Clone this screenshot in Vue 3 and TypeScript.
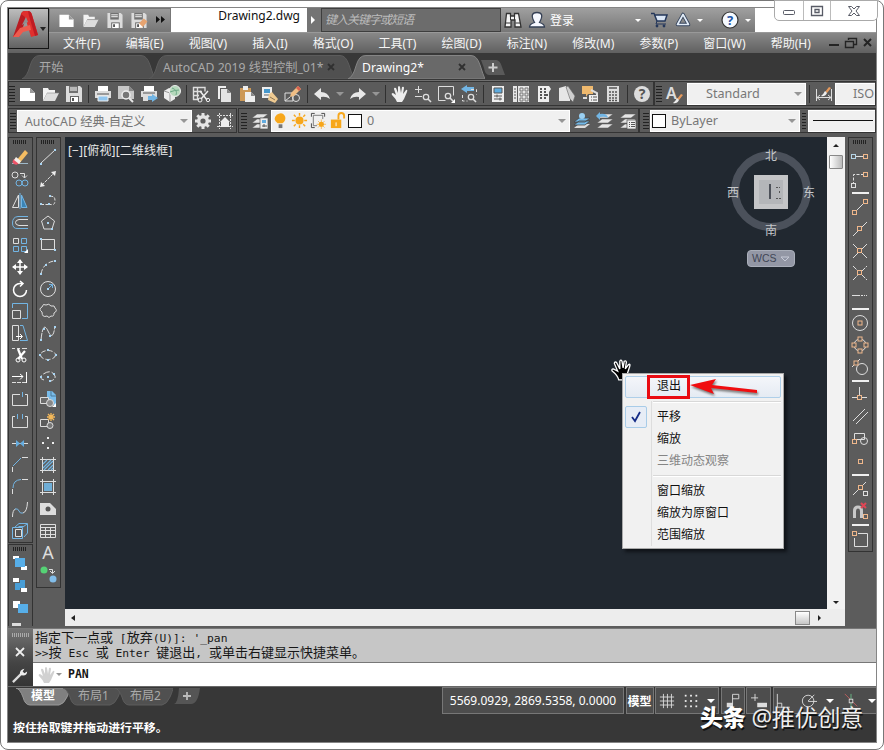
<script setup lang="ts">
type Glyphs = Record<string, string>

const w = 'stroke="#dedede" fill="none"'
const b = 'stroke="#72b5e4" fill="none"'
const o = 'stroke="#efb78b" fill="#5c5c5c"'
const dot = (x: number, y: number, c = '#a9d4f2') => `<rect x="${x - 1}" y="${y - 1}" width="2" height="2" fill="${c}"/>`
const sq = (x: number, y: number, c = o) => `<rect x="${x - 2.5}" y="${y - 2.5}" width="4" height="4" ${c}/>`
const lens = (x: number, y: number) => `<circle cx="${x}" cy="${y}" r="2.7" ${w} stroke-width="1.3"/><path d="M${x + 2} ${y + 2}l3 3" ${w} stroke-width="1.6"/>`
const brush = (x: number, y: number) => `<path d="M${x + 8} ${y}l2 1-4 5-2-1z" fill="#e69a5c"/><path d="M${x + 4} ${y + 4}l2 2q-2 4-6 3 2-1 4-5z" fill="#ededed"/>`
const disk = '<path d="M1 1h14l2 2v14H1z" fill="#dcdcdc"/><path d="M4 1h9v7H4z" fill="#717171"/><path d="M5 3h7M5 5h7" stroke="#fff"/><path d="M5 11h9v6H5z" fill="#666"/><path d="M6 12h7v5H6z" fill="#fff"/><path d="M7 13h2v3H7z" fill="#555"/>'
const layers = '<path d="M1 16l5-4h11l-5 4zM1 11l5-4h11l-5 4z M1 6l5-4h11l-5 4z" fill="#e5e5e5" stroke="#555" stroke-width=".5"/>'
const blueLayers = '<path d="M1 16l5-4h11l-5 4z" fill="#ddd"/><path d="M1 13l5-4h11l-5 4zM1 10l5-4h11l-5 4z" fill="#73b9e8" stroke="#454545" stroke-width=".8"/>'

const glyphs: Glyphs = {
  new: '<path d="M1 3h10l5 5v8H1z" fill="#fff"/><path d="M11 3v5h5z" fill="#999"/>',
  open: '<path d="M1 3h5l1 2h6v3H5l-4 8z" fill="#f2f2f2"/><path d="M5 8h12l-4 8H1z" fill="#ddd"/><path d="M5 8h12" stroke="#888" stroke-width=".6"/>',
  save: disk,
  saveas: disk + '<path d="M9 12l5-5 4 3-5 6-4 1z" fill="#e6a370"/><path d="M9 12l4 4-4 1z" fill="#fff"/>',
  print: '<path d="M4 1h10v5H4z" fill="#fff"/><path d="M1 6h16v7H1z" fill="#ddd"/><path d="M3 9h12" stroke="#555"/><path d="M4 11h10v5H4z" fill="#91c6ef" stroke="#eee"/>',
  preview: '<path d="M1 1h11l5 5v8H1z" fill="#c7c7c7"/><path d="M12 1v5h5" fill="#888"/><circle cx="9" cy="10" r="4" fill="#777" stroke="#eee" stroke-width="1.500"/><path d="M12 13l4 4" stroke="#e7e7e7" stroke-width="2"/>',
  publish: '<path d="M4 1h10v5H4z" fill="#fff"/><path d="M1 6h16v6H1zM3 12h5v4H3z" fill="#ddd"/><path d="M3 8h12" stroke="#555"/><path d="M8 11h4V9l6 4-6 4v-2H8z" fill="#72b5e4"/>',
  cloud: '<path d="M1 6l5-3 6 2v9l-5 3-6-4z" fill="#ececec"/><path d="M1 6l6 2v9M7 8l5-3" stroke="#999" fill="none"/><circle cx="12" cy="6" r="5.500" fill="#b7d9bd" stroke="#eee"/><path d="M9 3q6 2 4 7M7 7q5-2 9-2" fill="none" stroke="#6da987"/>',
  cut: '<path d="M1.500 2v13M1 2.500h12v4M1 6.500h9M1 10.500h6M1 14.500h6M5.500 3v11" stroke="#ddd" fill="none" stroke-width="1.400"/><path d="M8 6l7 9M16 6l-7 8" stroke="#eee" stroke-width="1.500"/><circle cx="8" cy="15" r="2" stroke="#eee" fill="none"/><circle cx="16" cy="15" r="1.700" stroke="#eee" fill="none"/>',
  copydoc: '<path d="M3 1h8v2H5v11H3z" fill="#eee"/><path d="M6 4h6l4 4v9H6z" fill="#e4e4e4"/><path d="M12 4v4h4z" fill="#888"/>',
  paste: '<path d="M2 3h11v13H2z" fill="#cc9856"/><path d="M5 1h5v4H5z" fill="#eee"/><path d="M7 7h6l4 4v6H7z" fill="#efefef"/><path d="M13 7v4h4z" fill="#888"/>',
  match: '<path d="M1 2h10v11H1z" fill="#eee"/><path d="M3 4h6v4H3z" fill="#4898cb"/><path d="M3 10h5" stroke="#666"/><path d="M8 9l3-2 6 7-3 4-7-3z" fill="#efca91"/><path d="M9 12l5 3" stroke="#8d7556"/>',
  blockedit: '<path d="M1 8h8v8H1zM1 16l5-4" '+w+'/><circle cx="12" cy="13" r="3.500" '+w+'/><path d="M7 8l7-7 3 3-7 7-4 1z" fill="#efbd84"/><path d="M14 1l3 3-2 2-3-3z" fill="#d96250"/>',
  undo: '<path d="M1 9l7-6v4q7 0 9 7-4-3-9-2v3z" fill="#e8e8e8"/>',
  redo: '<path d="M17 9l-7-6v4q-7 0-9 7 4-3 9-2v3z" fill="#e8e8e8"/>',
  hand: '<path d="M6 17q-1-3-5-7-1-2 1-2l3 2L3 4q0-2 2-1l2 5V2q1-2 2 0l1 6 1-6q2-1 2 1l-1 6 3-4q2-1 1 2l-3 7-2 3z" fill="#eee"/>',
  zoomrt: '<path d="M1 4.500h7M4.500 1v7M1 11.500h7" '+w+'/>' + lens(12,12),
  zoomwin: '<path d="M1.500 1.500h15v9M1.500 1.500v14h7" '+w+'/>' + lens(11,11) + '<path d="M18 18v-4l-4 4z" fill="#fff"/>',
  zoomprev: '<path d="M1 4l6-4v2h7v4H7v2z" fill="#72b5e4"/><path d="M2.500 10v6h5M11 4.500h5.500v5" '+w+' stroke-dasharray="3 2"/>' + lens(11,12),
  properties: '<path d="M3 1h12v16H3z" fill="#eee"/><path d="M5 3h8v5H5z" fill="#5facdf" stroke="#555"/><path d="M5 11h8M5 14h8M8 9.500v3M11 12.500v3" stroke="#555"/>',
  palettes: '<path d="M1 1h4v16H1zM6 1h11v16H6z" fill="#e6e6e6"/><path d="M2 4h2M2 7h2M2 10h2M2 13h2" stroke="#555"/><path d="M8 3h3v3H8zM13 3h3v3h-3zM8 8h3v3H8zM13 8h3v3h-3zM8 13h3v3H8zM13 13h3v3h-3z" fill="#e6e6e6" stroke="#777"/>',
  toolpal: '<path d="M3 1h11l2 3-2 3v10H3z" fill="#eee"/><path d="M5 4h2M9 4h2M5 7h2M9 7h2M5 10h2M9 10h4M5 13h2M9 13h2" stroke="#555" stroke-width="2"/>',
  sheets: '<path d="M1 3l7-2 4 11v4H1z" fill="#e6e6e6"/><path d="M8 2l2-1 7 10-2 6-3-3z" fill="#cfcfcf" stroke="#666" stroke-width=".6"/>',
  markup: '<path d="M1 1h11v8H7l-2 3V9H1z" fill="#efb96e"/><path d="M10 5l6 3v5h-6M2 13h4" '+w+' stroke-width="2"/><path d="M8 10h9v7H8z" fill="#eee"/><path d="M10 12h1M12 12h4M10 15h1M12 15h4" stroke="#555"/>',
  calc: '<path d="M3 1h12v16H3z" fill="#ddd"/><path d="M5 3h8M5 7h2M8 7h2M11 7h2M5 10h2M8 10h2M11 10h2M5 13h2M8 13h2M11 13h2M5 15.500h2M8 15.500h2M11 15.500h2" stroke="#555" stroke-width="1.500"/>',
  help: '<circle cx="9" cy="9" r="8" fill="#ddd"/><text x="9" y="14" text-anchor="middle" font-size="14" font-weight="700" fill="#555">?</text>',
  gear: '<circle cx="9" cy="9" r="4.300" fill="none" stroke="#e4e4e4" stroke-width="3.400"/><path d="M9 1v3M9 14v3M1 9h3M14 9h3M3.300 3.300l2.200 2.200M12.500 12.500l2.200 2.200M14.700 3.300l-2.200 2.200M5.500 12.500l-2.200 2.200" stroke="#e4e4e4" stroke-width="3"/>',
  workspace: '<path d="M3.500 1v16M14.500 1v16M1 3.500h16M1 14.500h16" '+w+' stroke-dasharray="2 1"/><path d="M4 10l5-5 5 5h-1v5H5v-5z" fill="#eee"/>',
  layerprop: layers + '<path d="M9 6h8v11H9z" fill="#eee" stroke="#555" stroke-width=".7"/><path d="M11 8h4v3h-4z" fill="#63ace0"/><path d="M11 14h5M13 12v3" stroke="#555"/>',
  layermake: blueLayers + '<circle cx="9" cy="4" r="3" fill="#9ad0f2"/>',
  layerprev: layers + '<path d="M0 4l4-4v2q7-1 8 4-3-2-8-1v3z" fill="#72b5e4"/>',
  layerstate: layers + '<path d="M8 8h9v9H8z" fill="#eee" stroke="#555" stroke-width=".7"/><path d="M10 10.500h1M12 10.500h4M10 12.500h1M12 12.500h4M10 14.500h1M12 14.500h4" stroke="#555"/>',
  bulb: '<path d="M6 12Q0 8 5 3q6-4 9 2 1 4-3 7z" fill="#f7a71b"/><path d="M7 13h4v4H7z" fill="#777"/>',
  sun: '<circle cx="9" cy="9" r="4.300" fill="#f7a71b"/><path d="M9 1v3M9 14v3M1 9h3M14 9h3M3 3l2 2M13 13l2 2M15 3l-2 2M5 13l-2 2" stroke="#f7a71b" stroke-width="1.500"/>',
  freeze: '<path d="M1.500 5V1.500H5M12 1.500h3.500V5M1.500 12v4.500H5" stroke="#444" fill="none"/><path d="M3.500 3.500h10v4M3.500 3.500v11h4" stroke="#777" fill="none"/><circle cx="12" cy="13" r="2.700" fill="#f7a71b"/><path d="M12 8v10M7 13h10M8.500 9.500l7 7M15.500 9.500l-7 7" stroke="#f7a71b" stroke-width=".7"/>',
  lock: '<path d="M2 8h11v9H2z" fill="#f7a71b"/><path d="M10 8V4q0-3 3-3t3 3v3" stroke="#f7a71b" stroke-width="2" fill="none"/><path d="M7.500 11v4" stroke="#fff"/>',
  textstyle: '<text x="0" y="14" font-size="16" font-weight="600" fill="#ddd">A</text>' + brush(7,9),
  dimstyle: '<path d="M1.500 4v12M16.500 4v12M2 12.500h14M5 10l-3 2.500 3 2.500M13 10l3 2.500-3 2.500" '+w+'/>' + brush(6,2),
  erase: '<path d="M1 15.500h16" stroke="#9fb9c9"/><path d="M5 13l9-11 3 3-9 11z" fill="#f5bd62"/><path d="M3 11l5 4q-2 3-5 1t0-5" fill="#ee5368"/><path d="M5 9l5 4-2 3-5-4z" fill="#f4eee9"/>',
  copy: '<circle cx="4" cy="5" r="3" '+w+'/><circle cx="8" cy="13" r="3" '+b+'/><circle cx="14" cy="13" r="3" '+b+'/><path d="M9 3.500h4.500V8M11 5.500l2.500 2.500L16 5.500" '+w+'/>',
  mirror: '<path d="M7.500 3v12.500H1.500z" '+w+'/><path d="M10.500 3l5.500 12.500h-5.500z" stroke="#72b5e4" fill="#3b84b5"/><path d="M9 1v16" '+b+'/>',
  offset: '<path d="M17 2.500H7Q1.500 3 1.500 9T7 14.500h10" '+b+'/><path d="M17 5.500H8Q4.500 6 4.500 8.500t3.500 3h9" '+w+'/>',
  array: '<path d="M2.500 2.500h5v5h-5z" '+w+'/><path d="M10.500 2.500h5v5h-5zM2.500 10.500h5v5h-5zM10.500 10.500h5v5h-5z" '+b+'/><path d="M17 17v-4l-4 4z" fill="#fff"/>',
  move: '<path d="M9 2v14M2 9h14" stroke="#fff" stroke-width="1.500"/><path d="M9 1l3 4H6zM9 17l3-4H6zM1 9l4-3v6zM17 9l-4-3v6z" fill="#fff"/>',
  rotate: '<path d="M11 3.500H9a6.500 6.500 0 1 0 6.500 6.500M9 1l3 2.500-3 3" stroke="#fff" stroke-width="1.500" fill="none"/>',
  scale: '<path d="M1.500 6V1.500h15v15H11" '+b+'/><path d="M1.500 8.500h8v8h-8z" '+w+'/>',
  stretch: '<path d="M1.500 1.500h6v15h-6z" '+w+'/><path d="M9 1.500h3l4.500 15H9" '+b+'/><path d="M5 12.500h6M9 10l2.500 2.500L9 15" stroke="#fff" fill="none"/>',
  trim: '<path d="M1 2.500h3M6 2.500h3M11 2.500h5" '+w+'/><path d="M7 3l4 10M14 5L7 13" stroke="#fff" stroke-width="2.200"/><circle cx="7" cy="14" r="2" stroke="#fff" fill="none"/><circle cx="13" cy="14" r="2" stroke="#fff" fill="none"/>',
  extend: '<path d="M1 14.500h14" '+w+' stroke-dasharray="4 1"/><path d="M1 8.500h11M9 6l3 2.500-3 3M15.500 4v11" stroke="#fff" fill="none"/>',
  break1: '<path d="M9 4.500H1.500v11h15v-11H14" '+w+'/><path d="M11.500 2v5" '+b+'/>',
  break2: '<path d="M4 4.500H1.500v11h15v-11H14" '+w+'/><path d="M6.500 2v5M11.500 2v5" '+b+'/>',
  join: '<path d="M1 9.500h16" '+w+'/><path d="M5 6l4 3.500L5 13zM13 6L9 9.500l4 3.500z" fill="#65ade0"/>',
  chamfer: '<path d="M1.500 16v-5M11 1.500h6" '+w+'/><path d="M2 10l8-8" '+b+'/>',
  fillet: '<path d="M1.500 16v-5M11 1.500h6" '+w+'/><path d="M2 10Q2 2 10 1.500" '+b+'/>',
  blend: '<path d="M1.500 17q0-7 3-8M12 13q4-1 4.500-11" '+w+'/><path d="M4 9q3-1 4 2t4 2" '+b+'/>',
  explode: '<path d="M4 5l4-3.500h8.500V11L13 15M12 5l4-3M7.500 4.500h5" '+b+'/><path d="M1.500 5.500h10v11h-10z" stroke="#74b8e8" fill="#555"/><path d="M4.500 7.500h6v7h-6z" '+w+'/>',
  line: '<path d="M2 15L16 2" '+w+'/>' + dot(2,16) + dot(16,2),
  xline: '<path d="M3 15L15 3" '+w+' stroke-dasharray="3 1"/><path d="M1 17l1-5 4 4zM17 1l-5 1 4 4z" fill="#eee"/>',
  pline: '<path d="M2 12.500h8M11 4.500q5-1 5 4t-4 4h-2" '+w+' stroke-dasharray="3 1.500"/>' + dot(2,12)+dot(10,12)+dot(11,4),
  polygon: '<path d="M9 2l6.500 5-2.500 8H5L2.500 7z" '+w+'/>'+dot(9,9)+dot(13,15),
  rectangle: '<path d="M2.500 3.500h13v10h-13z" '+w+'/>'+dot(2,3)+dot(16,14),
  arc: '<path d="M2 16Q4 5 15 3" '+w+' stroke-dasharray="5 2"/>'+dot(2,16)+dot(7,7)+dot(16,3),
  circle: '<circle cx="9" cy="9" r="7.500" '+w+'/><path d="M9 9l4-4M10 4.500h3.500V8" '+b+'/>'+dot(9,9),
  revcloud: '<path d="M3 10q-4-3 0-5 1-4 4-2 3-2 5 1 4-1 4 2 3 3-1 5 0 4-3 3-2 3-4 0-5 2-5-4" '+w+'/>',
  spline: '<path d="M2 16Q4-4 9 7t7-5" '+w+' stroke-dasharray="7 1"/>'+dot(2,16)+dot(5,5)+dot(11,12)+dot(16,3),
  ellipse: '<ellipse cx="9" cy="9" rx="7.500" ry="4.500" '+w+' stroke-dasharray="5 2"/>'+dot(1,9)+dot(9,4)+dot(17,9)+dot(9,14),
  ellarc: '<path d="M5 12q-6-2-2-5 9-7 13 1 1 3-4 5" '+w+' stroke-dasharray="7 2"/>'+dot(9,9)+dot(2,9)+dot(15,6)+dot(11,13),
  insert: '<path d="M8 1h5l4 4v10H8z" fill="#79bcea"/><path d="M12 1v5h5" stroke="#4d7a99" fill="none"/><path d="M1.500 7.500h8v6h-8z" stroke="#ddd" fill="#6b6b6b"/><circle cx="11" cy="13" r="3.500" stroke="#ddd" fill="#888"/><path d="M17 13v4h-4z" fill="#fff"/>',
  block: '<path d="M1.500 7.500h8v7h-8z" '+w+'/><circle cx="11" cy="13.500" r="3" stroke="#ddd" fill="#777"/><path d="M12 1v8M8 5h8M9 2l6 6M15 2L9 8" stroke="#f3b85a" stroke-width="1.300"/>',
  point: dot(9,4,'#eee')+dot(4,9,'#eee')+dot(14,9,'#eee')+dot(9,14,'#eee'),
  hatch: '<path d="M3.500 1v16M14.500 1v16M1 3.500h16M1 14.500h16" '+w+'/><path d="M4 8l4-4M4 12l8-8M5 14l9-9M9 14l5-5M12 14l2-2" stroke="#72b5e4" stroke-width="1.200"/>',
  gradient: '<path d="M5 5h8v8H5z" fill="#70aed6"/><path d="M3.500 1v16M14.500 1v16M1 3.500h16M1 14.500h16" '+w+'/>',
  region: '<path d="M1 3h10l6 6v6H1z" fill="#ddd"/><circle cx="9" cy="9" r="2.500" fill="#555"/>',
  table: '<path d="M1.500 2.500h15v13h-15zM1.500 5.500h15M1.500 8.500h15M1.500 12.500h15M6.500 6v10M11.500 6v10" '+w+'/>',
  mtext: '<text x="9" y="15" text-anchor="middle" font-size="18" fill="#ddd">A</text>',
  addsel: '<circle cx="5" cy="4" r="3.500" fill="#55d275"/><circle cx="14" cy="13" r="3.500" fill="#82bde9"/><path d="M10 3.500h3.500V7M11 5l2.500 2.500L16 5" '+w+'/>',
  order1: '<path d="M2 2h6v3H2zM10 12h6v4h-6z" fill="#fff"/><path d="M4 4h10v9H4z" fill="#57aee8"/>',
  order2: '<path d="M2 2h6v4H2zM10 12h6v4h-6z" fill="#fff"/><path d="M4 7h5V4h5v8h-5v2H4z" fill="#499ed6"/>',
  order3: '<path d="M2 3h7v7H2z" fill="#fff"/><path d="M7 6h10v9H7z" fill="#57aee8"/>',
  order4: '<path d="M1 3h9v3H1z" fill="#ddd"/>',
  track: '<path d="M3 8.500h9" '+w+'/>'+sq(3,9,'stroke="#b4d4e6" fill="#5c5c5c"')+sq(15,9),
  from: '<path d="M2.500 15V4.500h11" '+w+' stroke-dasharray="3 1.500"/>'+sq(15,5)+sq(3,16,'stroke="#dedede" fill="#5c5c5c"'),
  endpoint: '<path d="M3 15L15 3" '+w+'/>'+sq(4,15)+sq(15,4),
  midpoint: '<path d="M2 16L16 2" '+w+'/>'+sq(9,9),
  intersect: '<path d="M2 2l14 14M2 16L16 2" '+w+'/>'+sq(9,9),
  apparent: '<path d="M2 2l14 14M2 16L16 2" '+w+' stroke-dasharray="5 1"/>'+sq(9,9),
  extension: '<path d="M1 9.500h8M10 9.500h2M13 9.500h1M15 9.500h1" '+w+'/>',
  center: '<circle cx="9" cy="9" r="7.500" '+w+'/>'+sq(9.500,9.500),
  quadrant: '<circle cx="9" cy="9" r="6" '+w+'/>'+sq(9.500,3.500)+sq(3.500,9.500)+sq(15.500,9.500)+sq(9.500,15.500),
  tangent: '<circle cx="11" cy="11" r="5.500" '+w+'/><path d="M1 9l8-8" '+w+'/>'+sq(5.500,5.500),
  perpendicular: '<path d="M8.500 1v10M1 11.500h15" '+w+'/>'+sq(9,12),
  parallel: '<path d="M2 13L14 1M5 16L17 4" '+w+'/>',
  insertion: '<path d="M3.500 3.500h10v6h-10z" '+w+'/><circle cx="13" cy="11" r="3.500" '+w+'/>'+sq(4,12),
  node: sq(10,10),
  nearest: '<path d="M2 15L15 2" '+w+'/>'+sq(10,8)+'<rect x="12.500" y="11.500" width="4" height="4" '+w+'/>',
  nosnap: '<path d="M3.500 16V9q0-4 3.500-4t3.500 4v7" stroke="#c8c8c8" fill="none" stroke-width="3"/><path d="M10 1l5 5M15 1l-5 5" stroke="#df4655" stroke-width="2"/>'+sq(15,15),
  osnap: '<path d="M7 3.500h9.500v13h-13V8" '+w+'/>'+sq(4,4),
  wrench: '<path d="M1 17l9-9" stroke="#ddd" stroke-width="2.500"/><path d="M9 9q-1-6 5-7l-2 3 2 2 3-2q0 6-8 4" fill="#eee"/>',
  grid: '<path d="M5 1v16M9.500 1v16M14 1v16M1 4.500h16M1 9h16M1 13.500h16" '+w+'/>',
  snapgrid: [3,9,15].map(y => [3,9,15].map(x => dot(x,y,'#eee')).join('')).join(''),
  infer: '<path d="M8.500 13V1.500h7v5h-7" '+w+'/><path d="M2 11h7v5H2z" fill="#ddd"/>',
  dyn: '<path d="M0 5.500h8M4.500 1v8" '+w+'/><path d="M7 11h11v5H7z" fill="#ddd"/>',
  ortho: '<path d="M1.500 1v15h14M1.500 11.500h5v5" '+w+'/>',
  polar: '<circle cx="8" cy="9" r="6.500" '+w+'/><path d="M8 9.500h10M8 9l7-7" '+w+'/>',
  iso: '<path d="M2 1l14 14" stroke="#c35e5e"/><path d="M9 1v16" stroke="#6abd89"/>'+sq(9.500,9.500,'stroke="#ddd" fill="#4b4b4b"'),
  binocular: '<path d="M2.500 2.500h4V5h4V2.500h4L17 16h-6V9H7v7H1z" fill="#f4f4f4" stroke="#333" stroke-width="1.300"/><path d="M1.500 12h5M11.500 12h5M6.500 5v4M10.500 5v4" stroke="#333"/>',
  user: '<path d="M1.500 16q0-3 5-4.500Q1 1.500 9 1.500t2.500 10q5 1.500 5 4.500z" fill="#f6f8ff" stroke="#354055" stroke-width="1.300"/>',
  cart: '<path d="M1 2.500h3L7 10h8l2-6H5" stroke="#24375a" fill="#dae6f5" stroke-width="1.500"/><path d="M7 10l-1 3h10" stroke="#24375a" fill="none"/><circle cx="7" cy="15" r="1.400" fill="#24375a"/><circle cx="14" cy="15" r="1.400" fill="#24375a"/>',
  a360: '<path d="M9 3.500l5.500 10h-11z" stroke="#34435c" stroke-width="3.600" stroke-linejoin="round" fill="none"/><path d="M9 3.500l5.500 10h-11z" stroke="#e2ecf7" stroke-width="1.700" stroke-linejoin="round" fill="none"/>',
  helpblue: '<circle cx="9" cy="9" r="8" fill="#f6faff" stroke="#333" stroke-width="1.200"/><text x="9" y="14" text-anchor="middle" font-size="13" font-weight="700" fill="#1d54a5">?</text>'
}

const menus = ['文件(F)','编辑(E)','视图(V)','插入(I)','格式(O)','工具(T)','绘图(D)','标注(N)','修改(M)','参数(P)','窗口(W)','帮助(H)']
const fileTabs = [
  { label: '开始', width: 133, active: false, closable: false },
  { label: 'AutoCAD 2019 线型控制_01*', width: 205, active: false, closable: true },
  { label: 'Drawing2*', width: 137, active: true, closable: true }
]
const layoutTabs = [
  { label: '模型', width: 54, active: true },
  { label: '布局1', width: 58, active: false },
  { label: '布局2', width: 58, active: false }
]
const tabPath = (n: number) => `M0 24Q5 22 8 11T18 .5H${n - 14}Q${n - 8} .5 ${n - 5} 10T${n} 24Z`
const layoutPath = (n: number) => `M0 0Q4 1 7 9Q9 17 14 17H${n - 11}Q${n - 6} 16 ${n - 3} 9T${n} 0Z`

const standard = 'new open save | print preview publish cloud | cut copydoc paste match blockedit | undo v redo v | hand zoomrt zoomwin zoomprev | properties palettes toolpal sheets markup calc | help'.split(' ')
const modify = 'erase copy mirror offset array move rotate scale stretch trim extend break1 break2 join chamfer fillet blend explode'.split(' ')
const order = 'order1 order2 order3 order4'.split(' ')
const draw = 'line xline pline polygon rectangle arc circle revcloud spline ellipse ellarc insert block point hatch gradient region table mtext addsel'.split(' ')
const snaps = 'track from | endpoint midpoint intersect apparent extension | center quadrant tangent | perpendicular parallel insertion node | nearest nosnap | osnap'.split(' ')
const layerState = ['bulb','sun','freeze','lock']
const contextItems = [
  { label: '退出', hot: true }, { label: '' },
  { label: '平移', checked: true }, { label: '缩放' }, { label: '三维动态观察', disabled: true }, { label: '' },
  { label: '窗口缩放' }, { label: '缩放为原窗口' }, { label: '范围缩放' }
]
</script>

<template>
  <div class="window">
    <div class="window-buttons">
      <span><svg width="14" height="12"><rect x="1.500" y="5.500" width="11" height="4" rx="1" fill="#fff" stroke="#585b66"/></svg></span>
      <span><svg width="14" height="12"><path d="M1.500 1.500h11v9h-11zM5 4.500h4v3H5z" fill="#fff" stroke="#585b66" stroke-width="1.300"/></svg></span>
      <span><svg width="14" height="12"><path d="M1.500 1.500h3L7 4l2.500-2.500h3L9 6l3.500 4.500h-3L7 8l-2.500 2.500h-3L5 6z" fill="#fff" stroke="#585b66"/></svg></span>
    </div>
    <div class="frame">
      <div class="app-button">
        <svg width="40" height="40" viewBox="0 0 40 40">
          <path d="M4 28L12 5q1-3 4-3l3 1-5 15-4 10z" fill="#b91c22"/><path d="M12 5q1-3 4-3h3q3 0 4 4l6 20-7 2-6-20z" fill="#e0302e"/><path d="M19 2q3 0 4 4l6 20-3 1-6-20z" fill="#bf1c23"/><path d="M4 28l7-9 10-3 1 5-8 2-4 5z" fill="#ee5b4e"/><path d="M13 16l6-3-2-5z" fill="#8f8f8f"/>
          <path d="M31 18h6l-3 4z" fill="#222"/>
        </svg>
      </div>
      <header class="title-row">
        <div class="quick">
          <svg v-for="n in ['new','open','save','saveas']" :key="n" class="icon" viewBox="0 0 18 18" v-html="glyphs[n]" />
          <svg width="10" height="8"><path d="M0 0l4 3.500L0 7zM5 0l4 3.500L5 7z" fill="#111"/></svg>
        </div>
        <div class="doc-name">Drawing2.dwg</div>
        <div class="search-arrow"><svg width="6" height="8"><path d="M0 0l4 4-4 4z" fill="#fff"/></svg></div>
        <div class="search">键入关键字或短语</div>
        <div class="account">
          <svg class="icon" viewBox="0 0 18 18" v-html="glyphs.binocular" />
          <svg class="icon" viewBox="0 0 18 18" v-html="glyphs.user" />
          <span class="login">登录</span>
          <i class="tri light" />
          <svg class="icon" viewBox="0 0 18 18" v-html="glyphs.cart" />
          <svg class="icon" viewBox="0 0 18 18" v-html="glyphs.a360" />
          <i class="tri light" />
          <svg class="icon help-icon" viewBox="0 0 18 18" v-html="glyphs.helpblue" />
          <i class="tri light" />
        </div>
      </header>
      <nav class="menu-bar">
        <span v-for="m in menus" :key="m">{{ m }}</span>
        <svg class="mdi" width="44" height="12"><path d="M0 8h10" stroke="#242424" stroke-width="2"/><path d="M19.500 3V1.500h8v6H25M16.500 4.500h8v6h-8z" stroke="#242424" fill="none" stroke-width="1.400"/><path d="M35 2l7 7M42 2l-7 7" stroke="#242424" stroke-width="2"/></svg>
      </nav>
      <div class="file-tabs">
        <div v-for="t in fileTabs" :key="t.label" class="file-tab" :class="{ active: t.active }" :style="{ width: t.width + 'px' }">
          <svg class="tab-shape" :width="t.width" height="24"><path :d="tabPath(t.width)" /></svg>
          <span>{{ t.label }}</span><svg v-if="t.closable" class="close" width="9" height="9"><path d="M1 1l6 6M7 1L1 7" stroke="#333" stroke-width="1.800"/></svg>
        </div>
        <div class="new-tab"><svg width="26" height="17"><path d="M0 1h15q4 0 6 7l3 8H8Q4 16 3 9z" fill="#5a5a5a"/><path d="M12 4v9M7.500 8.500h9" stroke="#ccc" stroke-width="2"/></svg></div>
      </div>

      <div class="bars">
        <div class="bar-row">
          <div class="bar">
            <i class="grip" />
            <template v-for="(n, i) in standard" :key="i">
              <i v-if="n === '|'" class="rule" />
              <span v-else-if="n === 'v'" class="cell small"><i class="tri" /></span>
              <span v-else class="cell"><svg class="icon" viewBox="0 0 18 18" v-html="glyphs[n]" /></span>
            </template>
          </div>
          <div class="bar style-bar">
            <i class="grip" />
            <span class="cell wide"><svg class="icon" viewBox="0 0 18 18" v-html="glyphs.textstyle" /></span>
            <div class="combo text-style"><span>Standard</span><i class="tri" /></div>
            <i class="rule" />
            <span class="cell"><svg class="icon" viewBox="0 0 18 18" v-html="glyphs.dimstyle" /></span>
            <div class="combo dim-style"><span>ISO</span></div>
          </div>
        </div>
        <div class="bar-row">
          <div class="bar">
            <i class="grip" />
            <div class="combo workspace"><span>AutoCAD 经典-自定义</span><i class="tri" /></div>
            <span class="cell"><svg class="icon" viewBox="0 0 18 18" v-html="glyphs.gear" /></span>
            <span class="cell"><svg class="icon" viewBox="0 0 18 18" v-html="glyphs.workspace" /></span>
          </div>
          <div class="bar layer-bar">
            <i class="grip" />
            <span class="cell"><svg class="icon" viewBox="0 0 18 18" v-html="glyphs.layerprop" /></span>
            <div class="combo layer">
              <svg v-for="n in layerState" :key="n" class="icon" viewBox="0 0 18 18" v-html="glyphs[n]" />
              <i class="swatch" /><span>0</span><i class="tri" />
            </div>
            <span v-for="n in ['layermake','layerprev','layerstate']" :key="n" class="cell"><svg class="icon" viewBox="0 0 18 18" v-html="glyphs[n]" /></span>
          </div>
          <div class="bar color-bar">
            <i class="grip" />
            <div class="combo color"><i class="swatch" /><span>ByLayer</span><i class="tri" /></div>
            <i class="grip narrow" />
            <div class="combo linetype"><i /></div>
          </div>
        </div>
      </div>

      <main class="work">
        <div class="left-dock">
          <div class="vbar"><i class="vgrip" /><span v-for="n in modify" :key="n" class="vcell"><svg class="icon" viewBox="0 0 18 18" v-html="glyphs[n]" /></span></div>
          <div class="vbar order"><i class="vgrip" /><span v-for="n in order" :key="n" class="vcell"><svg class="icon" viewBox="0 0 18 18" v-html="glyphs[n]" /></span></div>
        </div>
        <div class="left-dock second">
          <div class="vbar"><i class="vgrip" /><span v-for="n in draw" :key="n" class="vcell"><svg class="icon" viewBox="0 0 18 18" v-html="glyphs[n]" /></span></div>
        </div>
        <section class="view">
          <div class="canvas">
            <div class="view-label">[−][俯视][二维线框]</div>
            <div class="compass">
              <svg width="100" height="104" viewBox="0 0 100 104">
                <circle cx="50" cy="54" r="36" fill="none" stroke="#4b515b" stroke-width="8"/>
                <path d="M33 38h34v34H33z" fill="#c4c5c7"/><path d="M38 43h24v24H38z" fill="#b4b6b9"/><path d="M49 47v15" stroke="#4d5159" stroke-width="2"/><path d="M55 50.500h4M58.500 54v3M55 61.500h5" stroke="#555" stroke-dasharray="2 1"/>
                <text x="50" y="22.500">北</text><text x="12" y="59.500">西</text><text x="88" y="59.500">东</text><text x="50" y="98">南</text>
              </svg>
              <div class="wcs">WCS <svg width="10" height="6"><path d="M1 1h8L5 5z" fill="#8f94a4" stroke="#c6c9d5"/></svg></div>
            </div>
            <svg class="pan-cursor" width="24" height="24" viewBox="-2 -2 22 22"><path d="M6 18q-1-4-6-8-1-2 1-2l4 2-3-7q0-2 2-1l3 6V1q1-2 2 0l1 6 1-6q2-1 2 1l-1 6 3-4q2-1 1 2l-3 9-1 3z" fill="#000" stroke="#fff" stroke-width="1.200"/></svg>
            <div class="context">
              <template v-for="(c, i) in contextItems" :key="i">
                <hr v-if="!c.label" />
                <div v-else class="context-item" :class="{ hot: c.hot, disabled: c.disabled }">
                  <span class="check" :class="{ on: c.checked }"><svg v-if="c.checked" width="10" height="12"><path d="M1 6l3 4 5-9" stroke="#152c86" stroke-width="1.800" fill="none"/></svg></span>
                  <span class="context-label">{{ c.label }}</span>
                </div>
              </template>
              <i class="red-frame" />
              <svg class="red-arrow" width="72" height="24"><path d="M0 9L26 3l-4 6 45 5v3l-46-5 3 6z" fill="#f00d10"/></svg>
            </div>
          </div>
          <div class="vscroll"><i class="up" /><i class="thumb" /><i class="down" /></div>
          <div class="hscroll"><i class="left" /><i class="thumb" /><i class="right" /></div>
        </section>
        <div class="right-dock">
          <div class="vbar">
            <i class="vgrip" />
            <template v-for="(n, i) in snaps" :key="i"><i v-if="n === '|'" class="vrule" /><span v-else class="vcell"><svg class="icon" viewBox="0 0 18 18" v-html="glyphs[n]" /></span></template>
          </div>
        </div>
      </main>

      <section class="command">
        <div class="command-side">
          <i class="dots" />
          <svg width="12" height="12"><path d="M2 2l8 8M10 2l-8 8" stroke="#eee" stroke-width="1.800"/></svg>
          <svg class="icon" viewBox="0 0 18 18" v-html="glyphs.wrench" />
        </div>
        <div class="command-main">
          <div class="history">
            <p>指定下一点或<em> [</em>放弃<em>(U)]: '_pan</em></p>
            <p><em>&gt;&gt;</em>按<em> Esc </em>或<em> Enter </em>键退出<em>, </em>或单击右键显示快捷菜单。</p>
          </div>
          <div class="prompt"><svg class="icon" viewBox="0 0 18 18" v-html="glyphs.hand" /><i class="tri" /><b>PAN</b></div>
        </div>
      </section>

      <footer class="status">
        <div class="layout-tabs">
          <div v-for="t in layoutTabs" :key="t.label" class="layout-tab" :class="{ active: t.active }" :style="{ width: t.width + 'px' }">
            <svg class="tab-shape" :width="t.width" height="18"><path :d="layoutPath(t.width)" /></svg><span>{{ t.label }}</span>
          </div>
          <svg class="layout-add" width="28" height="17"><path d="M6 0h21q-2 16-9 16H1Q5 15 6 0z" fill="#555"/><path d="M14 4v8M10 8h8" stroke="#bbb" stroke-width="1.800"/></svg>
        </div>
        <div class="hint">按住拾取键并拖动进行平移。</div>
        <div class="status-cells">
          <span class="coords">5569.0929, 2869.5358, 0.0000</span>
          <span class="model">模型</span>
          <span class="snap-cell"><svg class="icon" viewBox="0 0 18 18" v-html="glyphs.grid" /><svg class="icon" viewBox="0 0 18 18" v-html="glyphs.snapgrid" /><i class="tri light" /></span>
          <span class="one"><svg class="icon" viewBox="0 0 18 18" v-html="glyphs.infer" /></span>
          <span class="one"><svg class="icon" viewBox="0 0 18 18" v-html="glyphs.dyn" /></span>
          <span class="last"><svg class="icon" viewBox="0 0 18 18" v-html="glyphs.ortho" /><svg class="icon" viewBox="0 0 18 18" v-html="glyphs.polar" /><i class="tri light" /><svg class="icon" viewBox="0 0 18 18" v-html="glyphs.iso" /><i class="tri light" /></span>
        </div>
      </footer>
    </div>
    <div class="watermark"><b>头条</b> @推优创意</div>
  </div>
</template>

<style>
body { background: #fff; overflow: hidden; }
</style>
<style scoped>
* { box-sizing: border-box; }
.window { position: relative; width: 884px; height: 750px; padding: 7px; border: 1px solid #777; border-radius: 8px; background: #fff; font: 12px "Noto Sans", "Noto Sans CJK SC", sans-serif; color: #ddd; }
.frame { position: relative; width: 868px; height: 734px; display: flex; flex-direction: column; background: #5c5c5c; overflow: hidden; outline: 1px solid #858585; }
.icon { width: 18px; height: 18px; flex: none; display: block; overflow: visible; }
i { display: block; flex: none; }
.tri { width: 0; height: 0; border: 4px solid transparent; border-top: 4px solid #969696; border-bottom: 0; }
.tri.light { border-width: 3px; border-top-color: #fff; border-bottom: 0; }
.window-buttons { position: absolute; z-index: 2; left: 773px; top: -1px; width: 104px; height: 21px; display: grid; grid-template-columns: 28px 27px 1fr; border: 1px solid #aaa; border-radius: 0 0 5px 5px; background: #fff; }
.window-buttons span { display: grid; place-items: center; }
.window-buttons span + span { border-left: 1px solid #bbb; }
.app-button { position: absolute; z-index: 2; left: 0; top: 0; width: 41px; height: 41px; border: 1px solid #151515; background: linear-gradient(#bdbdbd, #626262); }
.title-row { height: 24px; flex: none; display: flex; background: #fff; }
.quick { margin-left: 41px; width: 122px; display: flex; align-items: center; padding-left: 8px; gap: 6px; background: linear-gradient(#9b9b9b, #777); border: 1px solid #777; }
.quick .icon { width: 18px; height: 17px; }
.quick svg:last-child { margin-left: 2px; }
.doc-name { width: 136px; padding-right: 7px; text-align: right; line-height: 16px; color: #111; }
.search-arrow { width: 14px; background: #747474; display: grid; place-items: center; }
.search { width: 180px; padding-left: 3px; line-height: 21px; font-style: italic; letter-spacing: -1px; color: #bcbcbc; background: #6c6c6c; border: 1px solid #3e3e3e; }
.account { width: 254px; display: flex; align-items: center; padding-left: 3px; background: linear-gradient(#a0a0a0, #777); }
.account .icon + .icon { margin-left: 6px; }
.login { margin: 0 61px 0 4px; color: #fff; }
.account .tri + .icon { margin-left: 9px; }
.account .icon + .tri { margin-left: 5px; }
.account .tri + .help-icon { margin-left: 18px; }
.account .help-icon + .tri { margin-left: 6px; }
.menu-bar { height: 21px; flex: none; display: flex; align-items: center; gap: 25.200px; padding-left: 55px; color: #f5f5f5; background: linear-gradient(#888, #606060); white-space: nowrap; border-top: 1px solid #999; }
.mdi { margin-left: -7px; flex: none; }
.file-tabs { height: 27px; flex: none; display: flex; align-items: flex-end; padding-left: 14px; padding-bottom: 1px; background: #383838; }
.file-tab { position: relative; height: 24px; display: flex; align-items: center; padding: 0 17px; color: #aaa; font-size: 12.200px; white-space: nowrap; }
.file-tab + .file-tab { margin-left: -6px; padding: 0 18px 0 14px; }
.file-tab span, .close, .layout-tab span { position: relative; }
.close { margin-left: auto; }
.tab-shape { position: absolute; left: 0; top: 0; }
.file-tab path, .layout-tab path { fill: #505050; stroke: #5c5c5c; }
.file-tab.active { color: #fff; }
.file-tab.active path:not(.close path) { fill: #696969; stroke: #858585; }
.file-tab .close path, .file-tab.active .close path { fill: none; stroke: #303030; }
.new-tab { margin: 0 0 3px -4px; height: 17px; }
.bars { height: 57px; flex: none; display: flex; flex-direction: column; gap: 2px; background: #5b5b5b; border-top: 1px solid #707070; }
.bar-row { display: flex; height: 25px; }
.bar { height: 25px; display: flex; align-items: center; border: 1px solid #343434; padding-left: 1px; }
.grip { width: 6px; height: 16px; margin-right: 1px; background: repeating-linear-gradient(#222 0 1px, transparent 1px 3px); }
.grip.narrow { width: 4px; margin: 0 2px; }
.cell { width: 23px; flex: none; display: grid; place-items: center; }
.cell.small { width: 13px; }
.rule { width: 1px; height: 18px; margin: 0 2.500px; background: #303030; }
.bar-row:first-child > .bar:first-child { width: 646px; padding-left: 0; }
.style-bar { flex: 1; overflow: hidden; }
.cell.wide { width: 24px; }
.combo { height: 22px; flex: none; display: flex; align-items: center; background: #f0f0f0; border: 1px solid #fff; color: #777; font-size: 12.600px; white-space: nowrap; }
.combo > .tri { margin-left: auto; margin-right: 3px; }
.text-style { width: 119px; padding-left: 18px; }
.dim-style { width: 60px; padding-left: 17px; }
.workspace { width: 175px; padding-left: 7px; font-size: 12.300px; }
.workspace + .cell { width: 21px; }
.bar-row:last-child > .bar:first-child { width: 229px; }
.layer-bar { width: 401px; margin-left: 1px; padding-left: 2px; }
.layer { width: 299px; gap: 2px; }
.layer .icon { width: 17px; height: 17px; }
.swatch { width: 14px; height: 14px; border: 1px solid #111; background: #fff; }
.layer .swatch { margin-right: 3px; }
.color-bar { flex: 1; padding-left: 3px; overflow: hidden; }
.color { width: 150px; padding-left: 1px; gap: 5px; }
.linetype { width: 80px; padding-left: 4px; }
.linetype i { width: 60px; height: 1px; background: #111; }
.work { height: 491px; flex: none; display: flex; background: #5c5c5c; }
.left-dock { width: 25px; height: 489px; overflow: hidden; margin-right: 3px; }
.left-dock.second { margin-right: 4px; }
.vbar { width: 25px; border: 1px solid #333; padding: 8px 0 1px; position: relative; }
.left-dock:first-child .vbar { padding-bottom: 0; }
.vbar.order { margin-top: 1px; padding-top: 7px; }
.vgrip { position: absolute; left: 4px; top: 2px; width: 14px; height: 4px; background: repeating-linear-gradient(90deg, #222 0 1px, transparent 1px 2px); }
.vcell { height: 22px; display: grid; place-items: center; padding-right: 1px; }
.view { width: 780px; display: grid; grid-template: 472px 17px / 762px 18px; align-content: start; background: #eee; height: 489px; }
.canvas { position: relative; background: #212830; }
.view-label { padding: 5px 0 0 3px; line-height: 17px; font-size: 12px; letter-spacing: .15px; color: #e8e8e8; }
.compass { position: absolute; left: 656px; top: 0; width: 100px; }
.compass > svg { display: block; }
.compass text { fill: #c5c7ca; font-size: 12px; text-anchor: middle; }
.wcs { width: 48px; height: 17px; margin: 9px 0 0 26px; padding-left: 4px; border-radius: 4px; background: #9397a5; border: 1px solid #aaafba; color: #3f4655; font: 10.500px/15px "Liberation Sans", sans-serif; }
.wcs svg { margin-left: 1px; }
.pan-cursor { position: absolute; left: 545px; top: 221px; }
.context { position: absolute; left: 557px; top: 236px; width: 162px; height: 176px; padding: 2px; color: #111; background: #f1f1f1; border: 1px solid #aaa; box-shadow: 3px 3px 3px #101419; }
.context::before { content: ""; position: absolute; left: 28px; top: 27px; bottom: 2px; border-left: 1px solid #ddd; }
.context-item { height: 22px; display: grid; grid-template-columns: 22px 1fr; gap: 10px; align-items: center; line-height: 20px; }
.context-item.hot { border: 1px solid #aecfe9; border-radius: 2px; background: linear-gradient(#f4f6fa, #e5ebf3); grid-template-columns: 21px 1fr; align-items: start; }
.context-item.hot .context-label { margin-top: -1px; }
.context-item.hot .check { height: 18px; }
.context-item.disabled { color: #858585; }
.context hr { height: 1px; margin: 3px 0 4px 28px; border: 0; background: #d8d8d8; box-shadow: 0 1px #fff; }
.check { height: 22px; display: grid; place-items: center; }
.check.on { border: 1px solid #a8cce8; border-radius: 2px; background: #e7edf6; }
.red-frame { position: absolute; left: 24px; top: 1px; width: 43px; height: 24px; border: 3px solid #e90b12; }
.red-arrow { position: absolute; left: 67px; top: 2px; filter: drop-shadow(1px 2px 1px #777); }
.vscroll { display: flex; flex-direction: column; align-items: center; background: #f2f2f2; padding: 7px 0 5px; }
.vscroll .up { border: 3px solid transparent; border-top: 0; border-bottom-color: #222; }
.vscroll .thumb { width: 14px; height: 14px; margin-top: 8px; border: 1px solid #888; border-radius: 1px; background: linear-gradient(90deg, #fff, #bbb); }
.vscroll .down { margin-top: auto; border: 3px solid transparent; border-bottom: 0; border-top-color: #222; }
.hscroll { grid-column: 1 / 3; display: flex; align-items: center; padding: 0 24px 0 6px; background: #ededed; }
.hscroll .left { border: 3px solid transparent; border-left: 0; border-right: 4px solid #222; }
.hscroll .thumb { margin-left: auto; width: 15px; height: 14px; border: 1px solid #888; background: linear-gradient(#fff, #c5c5c5); }
.hscroll .right { margin-left: 8px; border: 3px solid transparent; border-right: 0; border-left-color: #222; }
.right-dock { margin-left: 3px; width: 25px; }
.vrule { height: 2px; margin: 2px 3px; background: #f0f0f0; }
.command { height: 58px; flex: none; display: flex; border-top: 1px solid #777; }
.command-side { width: 25px; display: flex; flex-direction: column; align-items: center; justify-content: space-between; padding: 4px 1px 3px 0; background: linear-gradient(#737373, #444 60%, #353535); }
.dots { width: 17px; height: 4px; background: repeating-linear-gradient(90deg, #aaa 0 1px, transparent 1px 2px); }
.command-side .icon { width: 16px; height: 16px; }
.command-main { flex: 1; display: flex; flex-direction: column; background: #fff; color: #161616; }
.history { height: 34px; padding: 1px 2px; background: #c6c6c6; border-bottom: 1px solid #777; }
.history p { margin: 0; height: 15px; line-height: 15px; font: 13px/15px "Liberation Sans", "Noto Sans CJK SC", sans-serif; white-space: pre; }
.history em { font: 11.300px/15px "DejaVu Sans Mono", monospace; }
.prompt { flex: 1; display: flex; align-items: center; padding-left: 5px; }
.prompt .icon { opacity: .9; filter: brightness(.86); }
.prompt .tri { border-width: 3px; border-bottom: 0; margin: 0 6px 0 0; }
.prompt b { margin-top: -1px; font: bold 11.500px "DejaVu Sans Mono", monospace; }
.status { flex: 1; position: relative; display: grid; grid-template: 28px 1fr / 434px 434px; background: #373737; border-top: 1px solid #686868; }
.layout-tabs { display: flex; padding: 1px 0 0 8px; align-items: flex-start; }
.layout-tab { position: relative; height: 17px; padding-left: 15px; line-height: 16px; color: #aaa; white-space: nowrap; }
.layout-tab + .layout-tab { margin-left: -6px; }
.layout-tab.active + .layout-tab { margin-left: -7px; }
.layout-tab.active { color: #fff; font-weight: 700; }
.layout-tab.active path { fill: #808080; stroke: #999; }
.hint { grid-row: 2; padding: 2px 5px; line-height: 20px; font-size: 11.900px; font-weight: 700; color: #fff; }
.status-cells { grid-column: 2; grid-row: 1; display: grid; grid-template-columns: 182px 28px 64px 24px 25px 1fr; gap: 1.500px; align-self: start; height: 27px; background: #353535; color: #fff; }
.status-cells > span { display: flex; align-items: center; justify-content: center; border: 1px solid #777; background: #4d4d4d; }
.status-cells .coords { font-size: 12px; }
.status-cells .model { font-weight: 700; }
.status-cells .snap-cell { gap: 8px; }
.status-cells .icon { width: 16px; height: 16px; }
.status-cells .last { justify-content: flex-start; padding-left: 2px; gap: 9px; }
.status-cells .tri { border-width: 4px; border-bottom: 0; }
.watermark { position: absolute; z-index: 3; left: 699px; top: 703px; font-size: 23px; line-height: 26px; letter-spacing: -.2px; color: #eee; text-shadow: 1px 2px #111; white-space: nowrap; }
.watermark b { color: #fff; font-weight: 900; }
</style>
